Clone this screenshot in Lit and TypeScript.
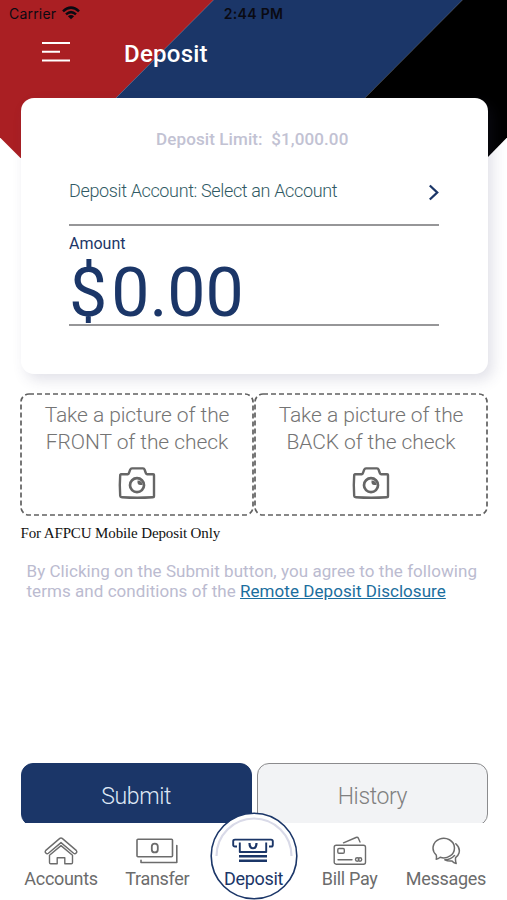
import { LitElement, html, css, svg } from "lit";
import { customElement, property } from "lit/decorators.js";
import { classMap } from "lit/directives/class-map.js";

const icons: Record<string, unknown> = {
  accounts: svg`<svg width="34" height="28" viewBox="0 0 34 28" fill="none" stroke="#6c6c6c" stroke-width="1.4" stroke-linejoin="round" stroke-linecap="round">
    <path d="M15.800 1.400 Q17 .5 18.200 1.400 L32.200 13.400 Q33.400 14.800 32.200 16 Q31 17.200 29.600 16.200 L17 5.600 L4.400 16.200 Q3 17.200 1.800 16 Q.6 14.800 1.800 13.400 Z"/>
    <path d="M17 8.600 L5.500 18.200 V25.500 Q5.500 26.700 6.700 26.700 H13.200 V20.800 H20.800 V26.700 H27.300 Q28.500 26.700 28.500 25.500 V18.200 Z"/></svg>`,
  transfer: svg`<svg width="42" height="28" viewBox="0 0 42 28" fill="none" stroke="#6c6c6c" stroke-width="1.6" stroke-linejoin="round" stroke-linecap="round">
    <rect x="1" y="2.200" width="35.500" height="17.500" rx="1"/>
    <path d="M40.800 8.500 V25.500 H5 V23.200"/><rect x="15.800" y="6.600" width="6" height="8.800" rx="3" stroke-width="1.800"/></svg>`,
  deposit: svg`<svg width="42" height="26" viewBox="0 0 42 26" fill="none" stroke="#1b3668" stroke-width="1.900" stroke-linejoin="round">
    <path d="M5 8.500 H3 Q1.200 8.500 1.200 6.900 V3.300 Q1.200 1.600 3 1.600 H39 Q40.800 1.600 40.800 3.300 V6.900 Q40.800 8.500 39 8.500 H37"/>
    <path d="M7.800 4.500 V14 H34.200 V4.500"/><path d="M17.500 5 C17.500 12 24.500 12 24.500 5" stroke-width="2.200"/>
    <path d="M7 18.200 H35 M7 22.800 H35" stroke-width="2.400"/></svg>`,
  billpay: svg`<svg width="34" height="30" viewBox="0 0 34 30" fill="none" stroke="#6c6c6c" stroke-width="1.400" stroke-linejoin="round" stroke-linecap="round">
    <rect x="1.200" y="9.200" width="31.300" height="19" rx="2"/>
    <path d="M10.500 6.800 L23 1.500 Q24.700 .9 25.500 2.400 L27 6"/>
    <rect x="4.800" y="12.500" width="6.500" height="4.700" rx="1.200"/><path d="M5 23.800 H19"/>
    <circle cx="24.200" cy="23.500" r="1.700"/><circle cx="27" cy="23.500" r="1.700"/></svg>`,
  messages: svg`<svg width="30" height="28" viewBox="0 0 30 28" fill="none" stroke="#6c6c6c" stroke-width="1.500" stroke-linejoin="round" stroke-linecap="round">
    <path d="M5.200 18 A10.700 9.800 0 1 1 9.200 20.300 Q7.200 22.100 5.200 22.200 Q5.800 20.300 5.200 18 Z"/>
    <path d="M24.800 6.800 Q29.500 11 28 16 Q27.300 18.600 24.600 20.600 Q24.200 23.800 25.200 26.500 Q22.500 26 21 24 Q17 24.500 13.800 22.800 Q20 22.500 23.500 18.500"/></svg>`,
};

@customElement("check-capture")
export class CheckCapture extends LitElement {
  @property() side = "";

  static styles = css`
    :host {
      flex: 1;
      position: relative;
      box-sizing: border-box;
      display: flex;
      flex-direction: column;
      align-items: center;
      padding-top: 9px;
      font: 300 21px/27px Roboto, sans-serif;
      letter-spacing: -0.080px;
      color: #747474;
      white-space: nowrap;
      text-align: center;
    }
    .outline {
      position: absolute;
      inset: 0;
      width: 100%;
      height: 100%;
      overflow: visible;
    }
    .outline rect {
      width: calc(100% - 2px);
      height: calc(100% - 2px);
    }
    .camera {
      margin-top: 10px;
    }
  `;

  render() {
    return html`
      <svg class="outline">
        <rect x="1" y="1" rx="8" fill="none" stroke="#606060" stroke-width="1.700" stroke-dasharray="5 3" />
      </svg>
      <div>Take a picture of the</div>
      <div>${this.side} of the check</div>
      <svg class="camera" width="38" height="34" viewBox="0 0 38 34" fill="none" stroke="#666" stroke-width="2.400" stroke-linejoin="round">
        <path d="M2.800 8.200 H10 Q10.800 7.900 11 6.800 L12.200 3.600 Q12.700 2.400 14 2.400 H25 Q26.200 2.400 26.600 3.600 L27.800 7 Q28.100 8.200 29 8.200 H35.200 Q36 8.200 36 9 V30 Q36 31.300 34.700 31.300 Q19 32.300 4 31.300 Q2.300 31.200 2.200 30 Q1.400 19 2.200 9 Z" />
        <circle cx="19" cy="19.200" r="7" stroke-width="2.700" />
        <path d="M19.500 14.500 V17 Q20 18.800 22 19 H24.500 Q24.500 14.500 19.500 14.500 Z" fill="#666" stroke="none" />
      </svg>
    `;
  }
}

@customElement("nav-item")
export class NavItem extends LitElement {
  @property() icon = "";
  @property() label = "";
  @property({ type: Boolean }) active = false;

  static styles = css`
    :host {
      display: block;
      width: 96.200px;
      position: relative;
    }
    .item {
      position: relative;
      display: flex;
      flex-direction: column;
      align-items: center;
      padding-top: 11px;
      font: 400 18px/22px Roboto, sans-serif;
      color: #6c6c6c;
      white-space: nowrap;
      letter-spacing: -0.300px;
    }
    .glyph {
      height: 34px;
      display: flex;
      align-items: center;
      justify-content: center;
      box-sizing: border-box;
      padding-bottom: 1px;
    }
    .active {
      color: #1b3668;
    }
    .active .glyph {
      padding-bottom: 0;
    }
    .ring {
      position: absolute;
      left: 4px;
      top: -12px;
    }
  `;

  render() {
    return html`
      ${this.active
        ? html`<svg class="ring" width="90" height="90" viewBox="0 0 90 90">
            <circle cx="45" cy="45" r="42.800" fill="#fff" stroke="#1b3668" stroke-width="1.600" />
            <path d="M7.500 45 A37.500 37.500 0 0 1 82.500 45" fill="none" stroke="#d9dae8" stroke-width="2.200" />
          </svg>`
        : ""}
      <div class=${classMap({ item: true, active: this.active })}>
        <span class="glyph">${icons[this.icon]}</span>
        <span>${this.label}</span>
      </div>
    `;
  }
}

@customElement("app-root")
export class AppRoot extends LitElement {
  static styles = css`
    :host {
      display: block;
      width: 507px;
      height: 900px;
      font-family: Roboto, sans-serif;
    }
    .screen {
      position: relative;
      height: 900px;
      display: flex;
      flex-direction: column;
      overflow: hidden;
      background: #fff;
    }
    .banner {
      position: absolute;
      left: 0;
      top: 0;
    }
    .status,
    .header,
    .card {
      position: relative;
    }
    .status {
      display: grid;
      grid-template-columns: 1fr auto 1fr;
      height: 27px;
      line-height: 28px;
      font-family: Inter, sans-serif;
      font-size: 14px;
      color: #0a0a12;
    }
    .carrier {
      display: flex;
      align-items: center;
      gap: 6px;
      padding-left: 9px;
      letter-spacing: 0.200px;
    }
    .carrier svg {
      margin-top: -2px;
    }
    .time {
      font-weight: 600;
      font-size: 14px;
      letter-spacing: 0.300px;
    }
    .header {
      display: flex;
      align-items: center;
      height: 53px;
      margin-bottom: 18px;
      padding-left: 42px;
      gap: 54px;
      color: #fff;
    }
    .header svg {
      margin-top: -3px;
    }
    h1 {
      margin: 0;
      font-weight: 500;
      font-size: 24px;
      line-height: 30px;
      letter-spacing: 0.250px;
    }
    .card {
      height: 276px;
      box-sizing: border-box;
      flex: none;
      margin: 0 19.500px 0 20.500px;
      border-radius: 13px;
      padding: 31px 49px 0 48.500px;
      background: #fff;
      box-shadow: 5px 6px 14px rgba(60, 60, 110, 0.150);
      color: #1b3668;
    }
    .limit {
      text-align: center;
      font-weight: 500;
      font-size: 17px;
      line-height: 20px;
      letter-spacing: 0.100px;
      color: #c2c2d3;
      white-space: pre;
      padding-right: 3px;
    }
    .account {
      display: flex;
      justify-content: space-between;
      align-items: center;
      margin-top: 22px;
      height: 55px;
      border-bottom: 2px solid #969698;
      font-weight: 300;
      font-size: 18px;
      letter-spacing: -0.360px;
      color: #305a64;
      box-sizing: border-box;
    }
    .account span {
      margin-top: -14px;
    }
    .account svg {
      margin-top: -11px;
    }
    .label {
      margin-top: 8px;
      font-size: 16px;
      line-height: 20px;
    }
    .amount {
      height: 70px;
      border-bottom: 2px solid #969698;
      font-size: 68px;
      line-height: 78px;
      display: flex;
      gap: 4px;
    }
    .captures {
      display: flex;
      height: 123px;
      margin: 19px 19px 0 20px;
    }
    .only {
      margin: 8px 0 0 20.500px;
      font: 15px/18px "Liberation Serif", serif;
      letter-spacing: -0.130px;
      color: #111;
    }
    .terms {
      margin: 19px 0 0 26.500px;
      font-size: 17px;
      line-height: 20px;
      letter-spacing: 0.050px;
      color: #bbbbd0;
      white-space: nowrap;
    }
    a {
      color: #1b6e9e;
      text-decoration: underline;
    }
    .actions {
      display: flex;
      gap: 5px;
      height: 60px;
      margin: auto 19px 0 20.500px;
      overflow: hidden;
    }
    .button {
      flex: 1;
      height: 63px;
      box-sizing: border-box;
      border: 1.500px solid #8b8b8d;
      border-radius: 12px;
      background: #f2f3f5;
      color: #808080;
      text-align: center;
      font-weight: 300;
      font-size: 23px;
      line-height: 65px;
      letter-spacing: -0.400px;
    }
    .primary {
      background: #1b3668;
      border-color: #1b3668;
      color: #dfe8f5;
    }
    .nav {
      display: flex;
      height: 77px;
      padding-left: 13px;
    }
  `;

  render() {
    return html`
      <div class="screen">
        <svg class="banner" width="507" height="160" viewBox="0 0 507 160">
          <path d="M0 0 H213.500 L56 158 H20.500 L0 137.500 Z" fill="#aa1f23" />
          <path d="M213.500 0 H462.500 L305 158 H56 Z" fill="#1b3668" />
          <path d="M462.500 0 H507 V137.500 L487 158 H305 Z" fill="#000" />
        </svg>
        <div class="status">
          <div class="carrier">
            <span>Carrier</span>
            <svg width="18" height="14" viewBox="0 0 18 14" fill="none" stroke="#0a0a12" stroke-width="2.500">
              <path d="M1 5.300 Q9 -2.100 17 5.300" />
              <path d="M4 8.400 Q9 3.900 14 8.400" />
              <path d="M9 13.300 L5.900 10.300 Q9 7.700 12.100 10.300 Z" fill="#0a0a12" stroke="none" />
            </svg>
          </div>
          <div class="time">2:44 PM</div>
        </div>
        <div class="header">
          <svg width="28" height="20" viewBox="0 0 28 20" stroke="#fff" stroke-width="2">
            <path d="M0 1 H28 M0 9.700 H18 M0 18.500 H28" />
          </svg>
          <h1>Deposit</h1>
        </div>
        <div class="card">
          <div class="limit">Deposit Limit:  $1,000.00</div>
          <div class="account">
            <span>Deposit Account: Select an Account</span>
            <svg width="11" height="17" viewBox="0 0 11 17" fill="none" stroke="#1b3668" stroke-width="2.300">
              <path d="M1.800 1.500 L9.200 8.500 L1.800 15.500" />
            </svg>
          </div>
          <div class="label">Amount</div>
          <div class="amount"><span>$</span><span>0.00</span></div>
        </div>
        <div class="captures">
          <check-capture side="FRONT"></check-capture>
          <check-capture side="BACK"></check-capture>
        </div>
        <div class="only">For AFPCU Mobile Deposit Only</div>
        <div class="terms">
          By Clicking on the Submit button, you agree to the following<br />terms and conditions of the
          <a>Remote Deposit Disclosure</a>
        </div>
        <div class="actions">
          <div class="button primary">Submit</div>
          <div class="button">History</div>
        </div>
        <div class="nav">
          <nav-item icon="accounts" label="Accounts"></nav-item>
          <nav-item icon="transfer" label="Transfer"></nav-item>
          <nav-item icon="deposit" label="Deposit" active></nav-item>
          <nav-item icon="billpay" label="Bill Pay"></nav-item>
          <nav-item icon="messages" label="Messages"></nav-item>
        </div>
      </div>
    `;
  }
}
